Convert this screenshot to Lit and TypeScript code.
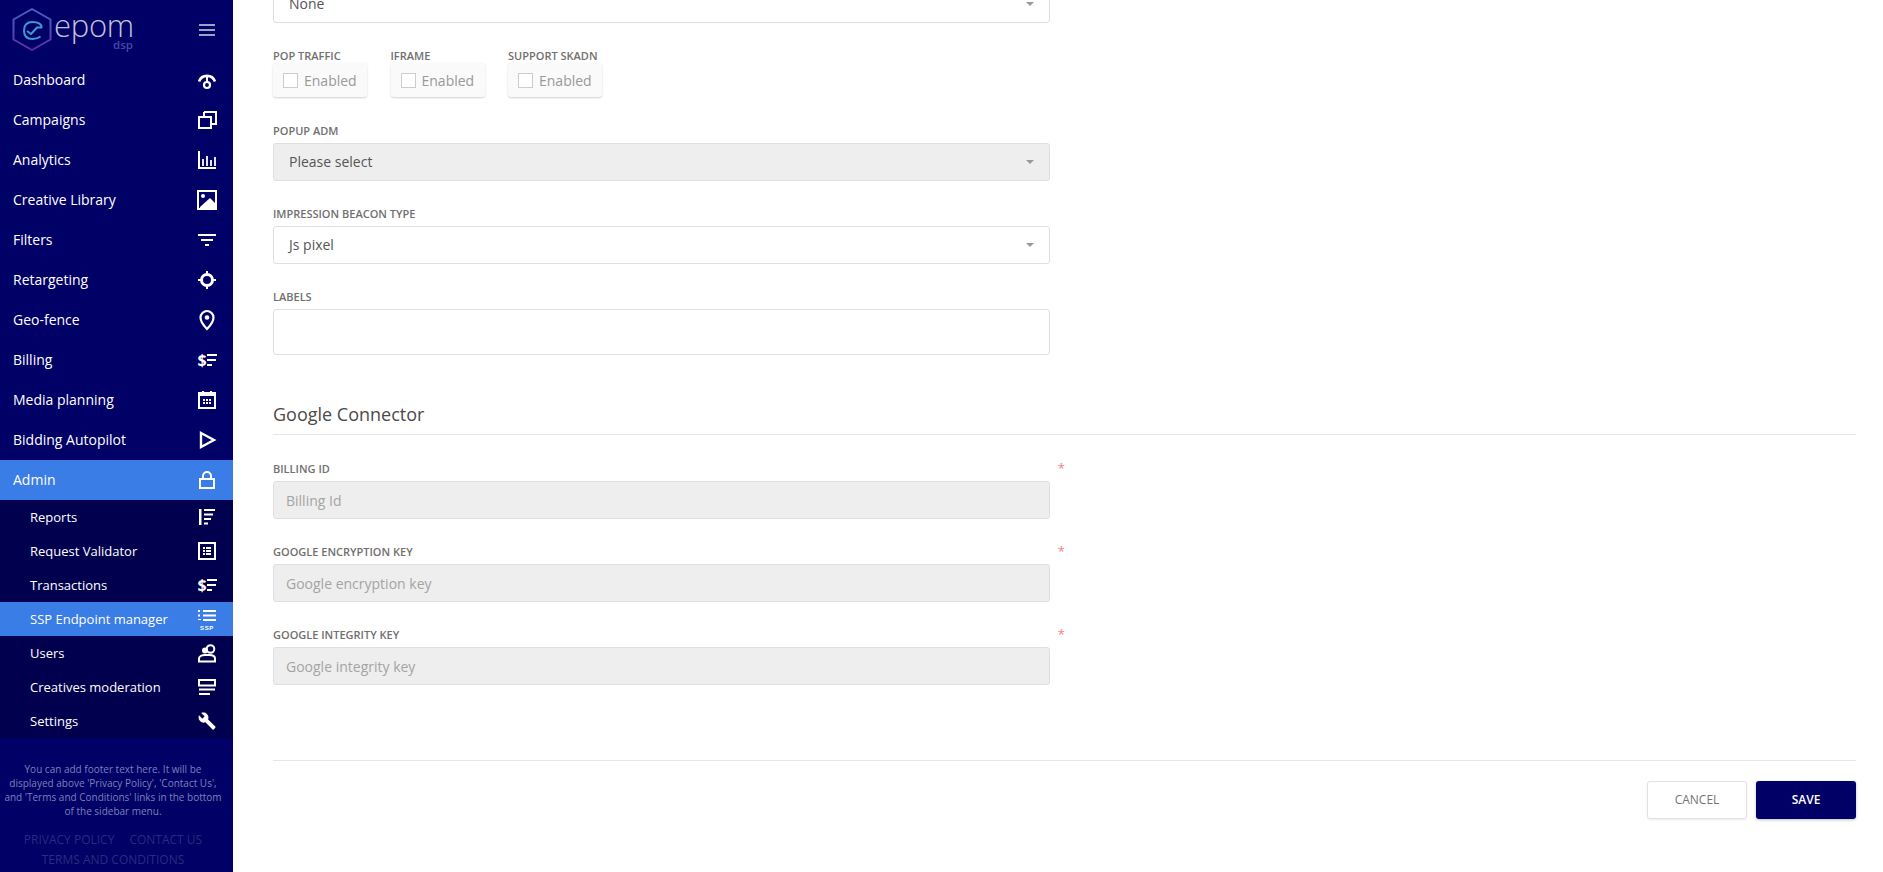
import { LitElement, html, css, svg } from "lit";
import { customElement } from "lit/decorators.js";

const icons: Record<string, unknown> = {
  dashboard: svg`<path d="M4 13.500a8.500 8.500 0 0 1 16 0" fill="none" stroke="#fff" stroke-width="2.600"/><path d="M12 7v7" stroke="#fff" stroke-width="2"/><circle cx="12" cy="17" r="3" fill="none" stroke="#fff" stroke-width="2.200"/>`,
  campaigns: svg`<path d="M9 4h12v12h-5M4 9h12v11H4z" fill="none" stroke="#fff" stroke-width="2"/><path d="M9 4v5" stroke="#fff" stroke-width="2"/>`,
  analytics: svg`<path d="M4 3v17h17" fill="none" stroke="#fff" stroke-width="2"/><path d="M8 11v7M12 8v10M16 12v6M20 9v9" stroke="#fff" stroke-width="1.800"/>`,
  image: svg`<path d="M3 3h18v18H3z" fill="none" stroke="#fff" stroke-width="2"/><circle cx="8" cy="8" r="2" fill="#fff"/><path d="M5 19l10-9 5 5v5H5z" fill="#fff"/>`,
  filters: svg`<path d="M10 18h4v-2h-4v2zM3 6v2h18V6H3zm3 7h12v-2H6v2z" fill="#fff"/>`,
  retarget: svg`<circle cx="12" cy="12" r="5.500" fill="none" stroke="#fff" stroke-width="3"/><path d="M12 3v5M12 16v5M3 12h5M16 12h5" stroke="#fff" stroke-width="2"/>`,
  geo: svg`<path d="M12 3C8.500 3 5.500 6 5.500 9.500c0 5 6.500 11.500 6.500 11.500s6.500-6.500 6.500-11.500C18.500 6 15.500 3 12 3z" fill="none" stroke="#fff" stroke-width="2.200"/><circle cx="12" cy="9.500" r="2.300" fill="#fff"/>`,
  billing: svg`<text class="dollar" x="2.500" y="17.500">$</text><path d="M12 7h10M12 12h9M12 17h5" stroke="#fff" stroke-width="1.800"/>`,
  calendar: svg`<path d="M4 5h16v15H4z" fill="none" stroke="#fff" stroke-width="2"/><path d="M4 5h16v3H4zM7 3h2v3H7zM15 3h2v3h-2z" fill="#fff"/><path d="M8 11h2v2H8zM11 11h2v2h-2zM14 11h2v2h-2zM8 14h2v2H8zM11 14h2v2h-2zM14 14h2v2h-2z" fill="#fff"/>`,
  play: svg`<path d="M6 5l13 7-13 7z" fill="none" stroke="#fff" stroke-width="2.400"/>`,
  lock: svg`<path d="M5 11h14v9H5z" fill="none" stroke="#fff" stroke-width="2"/><path d="M8 11V8a4 4 0 0 1 8 0v3" fill="none" stroke="#fff" stroke-width="2"/>`,
  reports: svg`<path d="M4 4h2.500v16H4z" fill="#fff"/><path d="M9 5h11M9 9.500h9M9 14h7M9 18.500h4" stroke="#fff" stroke-width="1.800"/>`,
  validator: svg`<path d="M4 4h16v16H4z" fill="none" stroke="#fff" stroke-width="2"/><path d="M8 8h2v2H8zM8 11h2v2H8zM8 14h2v2H8zM11 8h5v2h-5zM11 11h5v2h-5zM11 14h5v2h-5z" fill="#fff"/>`,
  ssp: svg`<path d="M3 3h2v2H3zM3 7.500h2v2H3zM6 12h-3v1h3z" fill="#fff"/><path d="M8 4h13M8 8.500h13M8 13h13" stroke="#fff" stroke-width="2"/><text class="ssp" x="12" y="23">SSP</text>`,
  users: svg`<circle cx="15.500" cy="8" r="3.800" fill="none" stroke="#fff" stroke-width="2"/><circle cx="10" cy="9.500" r="3" fill="#fff"/><path d="M4 20.500v-3c0-2 2.500-3.500 6-3.500h4.500c3.500 0 5.500 1.500 5.500 3.500v3z" fill="none" stroke="#fff" stroke-width="2"/>`,
  moderation: svg`<path d="M4 5h16v5.500H4z" fill="none" stroke="#fff" stroke-width="2"/><path d="M4 14.500h16M4 19h11" stroke="#fff" stroke-width="2"/>`,
  wrench: svg`<g transform="translate(2 2) scale(.85)"><path d="M21.500 18.300l-8.400-8.400c.8-2.100.4-4.600-1.400-6.300-1.800-1.800-4.600-2.200-6.800-1.200L9 6.200 6.200 9 2.400 5.100C1.300 7.300 1.800 10 3.600 11.900c1.800 1.800 4.200 2.200 6.300 1.400l8.400 8.400c.4.400.9.400 1.300 0l1.900-2.100c.4-.4.400-1 0-1.300z" fill="#fff"/></g>`,
};

const mainMenu = [
  ["Dashboard", "dashboard"], ["Campaigns", "campaigns"], ["Analytics", "analytics"],
  ["Creative Library", "image"], ["Filters", "filters"], ["Retargeting", "retarget"],
  ["Geo-fence", "geo"], ["Billing", "billing"], ["Media planning", "calendar"],
  ["Bidding Autopilot", "play"],
];
const subMenu = [
  ["Reports", "reports"], ["Request Validator", "validator"], ["Transactions", "billing"],
  ["SSP Endpoint manager", "ssp"], ["Users", "users"], ["Creatives moderation", "moderation"],
  ["Settings", "wrench"],
];

@customElement("app-root")
export class AppRoot extends LitElement {
  static styles = css`
    :host { display: flex; width: 1883px; height: 872px; overflow: hidden; background: #fff; font-family: "Open Sans", "Liberation Sans", sans-serif; }
    .side { width: 233px; flex: none; background: #000066; display: flex; flex-direction: column; color: #fff; }
    .logo { height: 60px; display: flex; align-items: center; justify-content: space-between; padding-right: 18px; flex: none; }
    .logo svg { display: block; }
    .epom { font-family: "Open Sans", sans-serif; font-weight: 300; font-size: 31px; letter-spacing: -.3px; fill: #c2c3da; }
    .dsp { font-family: "Open Sans", sans-serif; font-weight: 600; font-size: 11.500px; fill: #4548a8; }
    .burger { width: 16px; display: flex; flex-direction: column; gap: 3px; }
    .burger i { display: block; height: 2px; background: #9d9fc4; }
    .item { height: 40px; box-sizing: border-box; display: flex; align-items: center; justify-content: space-between; padding: 0 14px 0 13px; font-size: 14px; }
    .item span { margin-bottom: 2px; }
    .item.active { background: #3b7de6; }
    .sub { background: #00004e; }
    .subitem { height: 34px; display: flex; align-items: center; justify-content: space-between; padding: 0 14px 0 30px; font-size: 13px; }
    .subitem.active { background: #3b7de6; }
    .ico { width: 24px; height: 24px; display: block; flex: none; }
    .dollar { font: 700 16px "Open Sans", sans-serif; fill: #fff; }
    .ssp { font: 700 6px "Liberation Sans", sans-serif; fill: #fff; letter-spacing: .6px; text-anchor: middle; }
    .foot { padding: 24px 7px 0 0; text-align: center; font-size: 10px; line-height: 14px; color: #7f80b8; white-space: nowrap; }
    .links { margin-top: 12px; font-size: 12px; line-height: 20px; color: #2a2b7e; }
    .links span + span { margin-left: 15px; }

    .main { flex: 1; min-width: 0; padding: 0 27px 0 40px; }
    .form { margin-top: -15px; }
    .ctl { width: 777px; height: 38px; box-sizing: border-box; border: 1px solid #dfdfdf; border-radius: 3px; background: #fff; display: flex; align-items: center; justify-content: space-between; padding: 0 15px 0 15px; font-size: 14px; color: #555; }
    .ctl span:first-child { margin-bottom: 2px; }
    .ctl.off { background: #eee; }
    .ctl.tall { height: 46px; }
    .ctl.ph { color: #a4a4a4; padding-left: 12px; }
    .caret { width: 0; height: 0; border-left: 4px solid transparent; border-right: 4px solid transparent; border-top: 4px solid #999; }
    .group { margin-bottom: 26px; }
    .lab { display: block; height: 15px; line-height: 13px; margin-bottom: 4px; font-size: 11px; font-weight: 600; color: #707070; text-transform: uppercase; white-space: nowrap; }
    .labrow { display: flex; justify-content: space-between; width: 792px; }
    .req { color: #f47f7f; font-size: 13px; line-height: 13px; font-weight: 400; }
    .checks { display: flex; margin: 26px 0 27px; gap: 23.500px; }
    .checks .lab { height: 14px; margin: 0; }
    .cbox { width: 94px; height: 34px; box-sizing: border-box; background: #fafafa; border-radius: 3px; box-shadow: 0 1px 2px rgba(0,0,0,.18); display: flex; align-items: center; gap: 6px; padding-left: 10px; font-size: 14px; color: #999; }
    .cbox i { width: 15px; height: 15px; box-sizing: border-box; border: 1px solid #ccc; background: #fff; }
    h3 { margin: 0 0 27px; padding: 21px 0 8px; font-size: 18px; line-height: 24px; font-weight: 400; color: #4a4a4a; border-bottom: 1px solid #e6e6e6; }
    .actions { margin-top: 75px; padding-top: 20px; border-top: 1px solid #e6e6e6; display: flex; justify-content: flex-end; gap: 9px; }
    .btn { width: 100px; height: 38px; box-sizing: border-box; border-radius: 3px; display: flex; align-items: center; justify-content: center; padding-bottom: 2px; font-size: 12px; }
    .cancel { border: 1px solid #e2e2e2; color: #757575; box-shadow: 0 1px 2px rgba(0,0,0,.08); }
    .save { background: #000066; color: #fff; font-weight: 600; box-shadow: 0 1px 3px rgba(0,0,0,.25); }
  `;

  private icon(name: string) {
    return html`<svg class="ico" viewBox="0 0 24 24">${icons[name]}</svg>`;
  }

  private select(text: string, off = false) {
    return html`<div class="ctl ${off ? "off" : ""}"><span>${text}</span><span class="caret"></span></div>`;
  }

  private required(label: string, ph: string) {
    return html`<div class="group">
      <div class="labrow"><span class="lab">${label}</span><span class="req">*</span></div>
      <div class="ctl off ph">${ph}</div>
    </div>`;
  }

  render() {
    return html`
      <nav class="side">
        <div class="logo">
          <svg width="150" height="60" viewBox="0 0 150 60">
            <defs><linearGradient id="hex" x1="0" y1="0" x2="0" y2="1"><stop offset="0" stop-color="#4a62c4"/><stop offset="1" stop-color="#5a2fa8"/></linearGradient></defs>
            <path d="M32 9l18.500 10.500v20L32 50 13.500 39.500v-20z" fill="none" stroke="url(#hex)" stroke-width="2" stroke-linejoin="round"/>
            <path d="M27 31l4 3 6-6.500h4.500c0-3.500-3-5.500-9-5.500s-8.500 3-8.500 8.500 3 8.500 8.500 8.500c3 0 6-1 8-2.500" fill="none" stroke="#3d9ad1" stroke-width="2" stroke-linejoin="round"/>
            <text class="epom" x="54" y="37">epom</text>
            <text class="dsp" x="113" y="49">dsp</text>
          </svg>
          <div class="burger"><i></i><i></i><i></i></div>
        </div>
        ${mainMenu.map(([t, i]) => html`<div class="item"><span>${t}</span>${this.icon(i)}</div>`)}
        <div class="item active"><span>Admin</span>${this.icon("lock")}</div>
        <div class="sub">
          ${subMenu.map(([t, i]) => html`<div class="subitem ${t.startsWith("SSP") ? "active" : ""}"><span>${t}</span>${this.icon(i)}</div>`)}
        </div>
        <div class="foot">
          You can add footer text here. It will be<br />displayed above 'Privacy Policy', 'Contact Us',<br />and 'Terms and Conditions' links in the bottom<br />of the sidebar menu.
          <div class="links"><span>PRIVACY POLICY</span><span>CONTACT US</span><br />TERMS AND CONDITIONS</div>
        </div>
      </nav>
      <main class="main">
        <div class="form">
          ${this.select("None")}
          <div class="checks">
            ${["Pop traffic", "iFrame", "Support SKADN"].map((l) => html`<div><span class="lab">${l}</span><div class="cbox"><i></i>Enabled</div></div>`)}
          </div>
          <div class="group"><span class="lab">Popup ADM</span>${this.select("Please select", true)}</div>
          <div class="group"><span class="lab">Impression beacon type</span>${this.select("Js pixel")}</div>
          <div class="group"><span class="lab">Labels</span><div class="ctl tall"></div></div>
          <h3>Google Connector</h3>
          ${this.required("Billing Id", "Billing Id")}
          ${this.required("Google encryption key", "Google encryption key")}
          ${this.required("Google integrity key", "Google integrity key")}
          <div class="actions">
            <div class="btn cancel">CANCEL</div>
            <div class="btn save">SAVE</div>
          </div>
        </div>
      </main>
    `;
  }
}
